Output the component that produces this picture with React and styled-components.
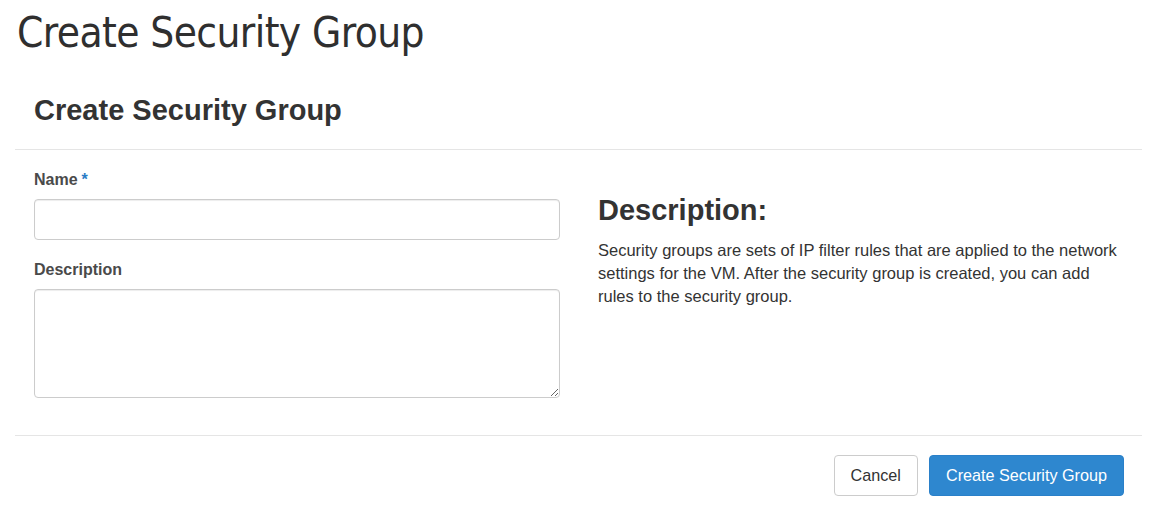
import React from "react";
import styled, { createGlobalStyle } from "styled-components";

const Global = createGlobalStyle`
  html, body { margin: 0; padding: 0; background: #fff; }
  body { font-family: "Liberation Sans", Arial, sans-serif; color: #333; font-size: 16px; }
  * { box-sizing: border-box; }
`;

const Page = styled.div`
  width: 1151px;
  height: 527px;
  overflow: hidden;
  padding: 0 9px 0 15px;
`;

const PageTitle = styled.h1`
  margin: 0;
  padding: 6px 0 0 2px;
  height: 74px;
  font-family: "DejaVu Sans Condensed", "DejaVu Sans", sans-serif;
  font-weight: 400;
  font-size: 42px;
  line-height: 54px;
  color: #2f2f2f;
  letter-spacing: -0.6px;
`;

const Modal = styled.div`
  display: flex;
  flex-direction: column;
`;

const Header = styled.div`
  padding: 17px 19px 0;
  height: 76px;
  border-bottom: 1px solid #e5e5e5;
`;

const HeaderTitle = styled.h3`
  margin: 0;
  font-size: 29px;
  font-weight: 700;
  line-height: 38px;
  color: #333;
`;

const Body = styled.div`
  display: flex;
  gap: 38px;
  padding: 20px 19px 0;
  height: 286px;
  border-bottom: 1px solid #e5e5e5;
`;

const FormCol = styled.div`
  flex: 0 0 526px;
  display: flex;
  flex-direction: column;
`;

const Group = styled.div`
  display: flex;
  flex-direction: column;
  margin-bottom: ${(p) => p.$mb || 0}px;
`;

const Label = styled.label`
  font-weight: 700;
  font-size: 16px;
  line-height: 20px;
  color: #4a4a4a;
  margin-bottom: 9px;
`;

const Req = styled.span`
  color: #2a7bc5;
  margin-left: 4px;
`;

const Input = styled.input`
  width: 100%;
  height: 41px;
  border: 1px solid #ccc;
  border-radius: 4px;
  box-shadow: inset 0 1px 1px rgba(0, 0, 0, 0.075);
  font: inherit;
  padding: 6px 12px;
`;

const TextArea = styled.textarea`
  width: 100%;
  height: 109px;
  border: 1px solid #ccc;
  border-radius: 4px;
  box-shadow: inset 0 1px 1px rgba(0, 0, 0, 0.075);
  font: inherit;
  padding: 6px 12px;
  resize: vertical;
`;

const InfoCol = styled.div`
  flex: 1;
  min-width: 0;
  padding-top: 21px;
`;

const InfoTitle = styled.h3`
  margin: 0 0 10px;
  font-size: 29px;
  font-weight: 700;
  line-height: 38px;
  color: #333;
`;

const InfoText = styled.p`
  margin: 0;
  max-width: 530px;
  font-size: 16.5px;
  line-height: 23px;
  color: #333;
`;

const Footer = styled.div`
  display: flex;
  justify-content: flex-end;
  gap: 11px;
  padding: 19px 18px 0;
`;

const Button = styled.button`
  height: 41px;
  padding: 0 16px;
  border-radius: 4px;
  font-family: "Liberation Sans", Arial, sans-serif;
  font-size: 16.2px;
  border: 1px solid ${(p) => (p.$primary ? "#2a80c9" : "#ccc")};
  background: ${(p) => (p.$primary ? "#2e87cf" : "#fff")};
  color: ${(p) => (p.$primary ? "#fff" : "#333")};
`;

export default function App() {
  return (
    <Page>
      <Global />
      <PageTitle>Create Security Group</PageTitle>
      <Modal>
        <Header>
          <HeaderTitle>Create Security Group</HeaderTitle>
        </Header>
        <Body>
          <FormCol>
            <Group $mb={20}>
              <Label>
                Name<Req>*</Req>
              </Label>
              <Input type="text" />
            </Group>
            <Group>
              <Label>Description</Label>
              <TextArea />
            </Group>
          </FormCol>
          <InfoCol>
            <InfoTitle>Description:</InfoTitle>
            <InfoText>
              Security groups are sets of IP filter rules that are applied to the
              network settings for the VM. After the security group is created,
              you can add rules to the security group.
            </InfoText>
          </InfoCol>
        </Body>
        <Footer>
          <Button>Cancel</Button>
          <Button $primary>Create Security Group</Button>
        </Footer>
      </Modal>
    </Page>
  );
}
